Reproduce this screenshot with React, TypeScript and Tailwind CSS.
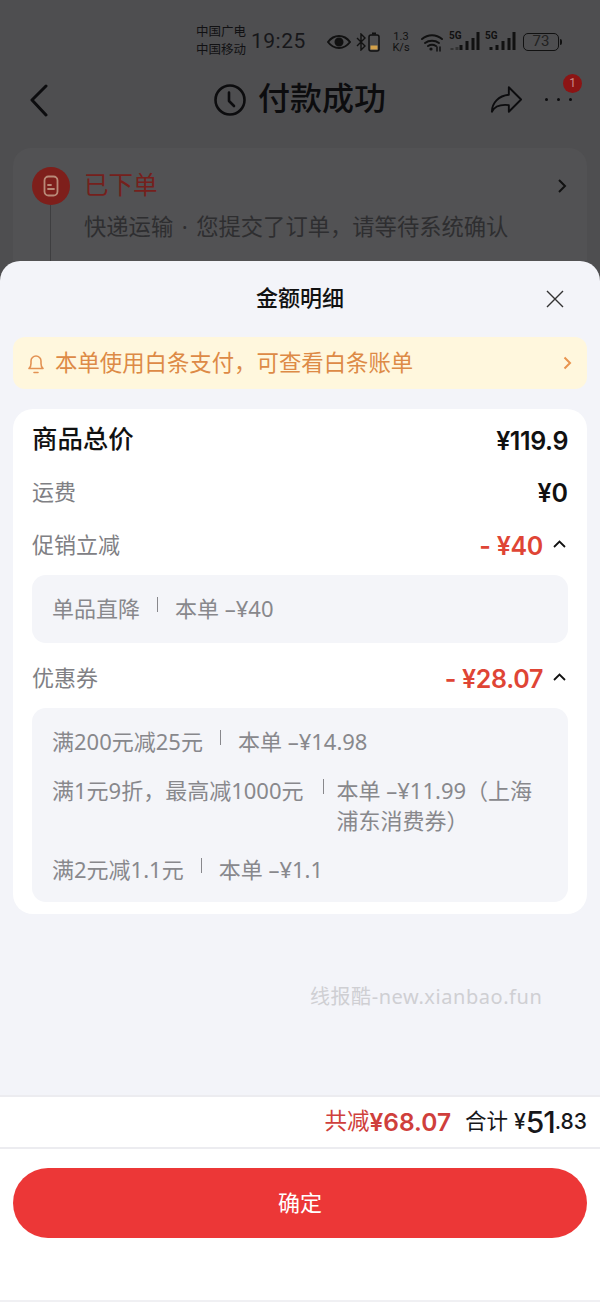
function Sep({ cls }: { cls: string }) {
  return <span className={`shrink-0 mt-[4px] w-px h-[15px] bg-[#88888c] ${cls}`} />;
}
function Up() {
  return (
    <svg className="ml-[10px] mr-[2px] -mt-[3px]" width="13" height="8" viewBox="0 0 13 8" fill="none" stroke="#111" strokeWidth="1.800">
      <path d="M1 7l5.500-5.500L12 7" />
    </svg>
  );
}
export default function App() {
  return (
    <div className="w-[600px] h-[1302px] overflow-hidden flex flex-col bg-[#4e4e50] font-['Noto_Sans','Noto_Sans_CJK_SC',sans-serif]">
      {/* dimmed page */}
      <div className="h-[261px] shrink-0 flex flex-col">
        <div className="h-[82px] shrink-0 flex items-center pl-[196px] pt-[1px] text-[#111113]">
          <div className="flex flex-col text-[12.5px] leading-[18px] w-[52px] -mt-[1px]">
            <span>中国广电</span>
            <span>中国移动</span>
          </div>
          <span className="text-[21px] leading-none ml-[3px] w-[57px] font-['Roboto',sans-serif] tracking-[0.5px] text-[#17171a]">19:25</span>
          <svg className="ml-[19px]" width="24" height="16" viewBox="0 0 24 16" fill="none" stroke="#111" strokeWidth="2"><path d="M1 8c3-4 7-6 11-6s8 2 11 6c-3 4-7 6-11 6S4 12 1 8z" /><circle cx="12" cy="8" r="3.500" fill="#111" /></svg>
          <svg className="ml-[5px]" width="10" height="18" viewBox="0 0 10 18" fill="none" stroke="#111" strokeWidth="1.400"><path d="M1 5l8 8-4 4V1l4 4-8 8" /></svg>
          <svg className="ml-[2px]" width="12" height="20" viewBox="0 0 12 20" fill="none"><rect x="1" y="3" width="10" height="16" rx="2" stroke="#111" strokeWidth="1.500" /><rect x="4" y="0.500" width="4" height="2" fill="#111" /><rect x="2.500" y="13.500" width="7" height="4" fill="#d4a24a" /></svg>
          <div className="ml-[9px] flex flex-col items-center text-[11px] leading-[11px] w-[24px] font-['Roboto',sans-serif] text-[#111]">
            <span>1.3</span>
            <span>K/s</span>
          </div>
          <svg className="ml-[7px]" width="24" height="20" viewBox="0 0 24 20" fill="none" stroke="#111" strokeWidth="2" strokeLinecap="round"><path d="M2 7c6-5 14-5 20 0M5 11c4-3 10-3 14 0M8 14c2.500-1.500 5.500-1.500 8 0" /><circle cx="11" cy="17" r="1.600" fill="#111" stroke="none" /><path d="M17 15v4M20 15v4" strokeWidth="1.500" /></svg>
          <div className="ml-[5px] relative w-[31px] h-[20px]">
            <span className="absolute left-0 -top-[1px] text-[10px] leading-[10px] font-bold font-['Roboto',sans-serif] text-[#111]">5G</span>
            <svg className="absolute left-0 top-0" width="31" height="20" viewBox="0 0 31 20" stroke="#111" strokeWidth="3"><path d="M3 18v-2M8 18v-3" stroke="#333" /><path d="M12 18v-5M18 18v-9M24 18v-12M29 18v-18" /></svg>
          </div>
          <div className="ml-[5px] relative w-[31px] h-[20px]">
            <span className="absolute left-0 -top-[1px] text-[10px] leading-[10px] font-bold font-['Roboto',sans-serif] text-[#111]">5G</span>
            <svg className="absolute left-0 top-0" width="31" height="20" viewBox="0 0 31 20" stroke="#111" strokeWidth="3"><path d="M6 18v-3M12 18v-5M18 18v-9M24 18v-12M29 18v-18" /></svg>
          </div>
          <div className="ml-[7px] w-[36px] h-[18px] rounded-[5px] border-[1.5px] border-[#111] flex items-center justify-center text-[15px] leading-none font-['Roboto',sans-serif] text-[#222]">73</div>
          <div className="ml-[1px] w-[2px] h-[6px] rounded-r bg-[#111]" />
        </div>
        <div className="h-[36px] shrink-0 relative flex items-center justify-center">
          <svg className="absolute left-[29px] top-[1px]" width="20" height="34" viewBox="0 0 20 34" fill="none" stroke="#0c0c0e" strokeWidth="3" strokeLinecap="round" strokeLinejoin="round"><path d="M17 3L3 17l14 15" /></svg>
          <div className="flex items-center gap-[12px] -mt-[1px]">
            <svg width="32" height="32" viewBox="0 0 32 32" fill="none" stroke="#0c0c0e" strokeWidth="2.600" strokeLinecap="round" strokeLinejoin="round"><circle cx="16" cy="16" r="14.500" /><path d="M15 8.500v8.500l5 5" /></svg>
            <span className="text-[32px] leading-[36px] font-medium text-[#0c0c0e] pb-[3px]">付款成功</span>
          </div>
          <svg className="absolute left-[490px] top-[3px]" width="32" height="29" viewBox="0 0 34 30" fill="none" stroke="#0c0c0e" strokeWidth="2" strokeLinejoin="round"><path d="M20 2l13 13-13 13v-7C11 20 5 22 2 28c0-9 7-17 18-18V2z" /></svg>
          <div className="absolute left-[545px] top-[16px] flex gap-[9px]">
            <span className="w-[3px] h-[3px] rounded-full bg-[#0c0c0e]" />
            <span className="w-[3px] h-[3px] rounded-full bg-[#0c0c0e]" />
            <span className="w-[3px] h-[3px] rounded-full bg-[#0c0c0e]" />
          </div>
          <span className="absolute left-[563px] -top-[8px] w-[19px] h-[19px] rounded-full bg-[#8c1414] text-[#c98a8a] text-[12px] leading-[19px] text-center font-['Roboto',sans-serif]">1</span>
        </div>
        <div className="mt-[30px] mx-[13px] flex-1 rounded-t-[18px] bg-[#525254] px-[19px] pt-[19px] relative">
          <div className="flex items-center">
            <div className="w-[38px] h-[38px] rounded-full bg-[#7e1f1b] flex items-center justify-center">
              <svg width="16" height="22" viewBox="0 0 16 22" fill="none" stroke="#b98a78" strokeWidth="1.800" strokeLinecap="round"><rect x="1.500" y="1.500" width="13" height="19" rx="4" /><path d="M5 10h3M5 14h6" /></svg>
            </div>
            <span className="ml-[14px] text-[24.5px] leading-[34px] pb-[2px] text-[#75201c]">已下单</span>
            <svg className="ml-auto mr-[1px]" width="10" height="16" viewBox="0 0 10 16" fill="none" stroke="#111" strokeWidth="2"><path d="M2 2l6 6-6 6" /></svg>
          </div>
          <div className="ml-[52px] mt-[7px] text-[22.3px] leading-[30px] text-[#2e2e30] flex">
            <span>快递运输</span>
            <span className="w-[23px] text-center">·</span>
            <span>您提交了订单，请等待系统确认</span>
          </div>
          <div className="absolute left-[37px] top-[57px] bottom-0 w-px bg-[#3e3e40]" />
        </div>
      </div>

      {/* sheet */}
      <div className="flex-1 rounded-t-[20px] bg-[#f3f4f9] flex flex-col overflow-hidden">
        <div className="h-[76px] shrink-0 relative flex items-center justify-center">
          <span className="text-[22px] leading-[30px] font-medium text-[#111] pb-[4px]">金额明细</span>
          <svg className="absolute left-[546px] top-[29px]" width="18" height="18" viewBox="0 0 18 18" fill="none" stroke="#333" strokeWidth="1.400"><path d="M1 1l16 16M17 1L1 17" /></svg>
        </div>
        <div className="mx-[13px] h-[52px] shrink-0 rounded-[12px] bg-[#fff7dd] flex items-center pl-[14px] pr-[15px]">
          <svg width="18" height="21" viewBox="0 0 18 21" fill="none" stroke="#e39253" strokeWidth="1.600" strokeLinecap="round" strokeLinejoin="round"><path d="M2 15.500h14c-1.500-1-2-2.500-2-5V8A5 5 0 0 0 4 8v2.500c0 2.500-.5 4-2 5zM7 19.500h4" /></svg>
          <span className="ml-[10px] text-[22.4px] leading-[30px] pb-[1px] text-[#dd8a46]">本单使用白条支付，可查看白条账单</span>
          <svg className="ml-auto" width="9" height="14" viewBox="0 0 9 14" fill="none" stroke="#e8944f" strokeWidth="2"><path d="M1.500 1.500L7 7l-5.500 5.500" /></svg>
        </div>
        <div className="mx-[13px] mt-[20px] h-[505px] shrink-0 rounded-[20px] bg-white px-[19px] pt-[13px]">
          <div className="flex items-center justify-between h-[36px]">
            <span className="text-[25.4px] leading-[32px] pb-[4px] font-medium text-[#111]">商品总价</span>
            <span className="text-[25px] leading-[36px] pt-[2px] tracking-[-0.4px] font-semibold font-['Inter',sans-serif] text-[#111]">¥119.9</span>
          </div>
          <div className="flex items-center justify-between h-[36px] mt-[16px]">
            <span className="text-[22px] leading-[30px] pb-[3px] text-[#808084]">运费</span>
            <span className="text-[25px] leading-[36px] pt-[2px] font-semibold font-['Inter',sans-serif] text-[#111]">¥0</span>
          </div>
          <div className="flex items-center justify-between h-[36px] mt-[17px]">
            <span className="text-[22px] leading-[30px] pb-[3px] text-[#808084]">促销立减</span>
            <div className="flex items-center">
              <span className="text-[25px] leading-[36px] pt-[1px] tracking-[-0.3px] font-semibold font-['Inter',sans-serif] text-[#df4535]">- ¥40</span>
              <Up />
            </div>
          </div>
          <div className="mt-[12px] h-[68px] rounded-[14px] bg-[#f4f5f9] px-[20px] flex items-start pt-[18px] text-[22px] leading-[30px] text-[#88888c]">
            <span>单品直降</span>
            <Sep cls="ml-[17px]" />
            <span className="ml-[17px]">本单 –¥40</span>
          </div>
          <div className="flex items-center justify-between h-[36px] mt-[17px]">
            <span className="text-[22px] leading-[30px] pb-[3px] text-[#808084]">优惠券</span>
            <div className="flex items-center">
              <span className="text-[25px] leading-[36px] pt-[1px] tracking-[-0.3px] font-semibold font-['Inter',sans-serif] text-[#df4535]">- ¥28.07</span>
              <Up />
            </div>
          </div>
          <div className="mt-[12px] h-[194px] rounded-[14px] bg-[#f4f5f9] px-[20px] pt-[18px] flex flex-col text-[22px] leading-[30px] text-[#88888c]">
            <div className="flex items-start">
              <span>满200元减25元</span>
              <Sep cls="ml-[17px]" />
              <span className="ml-[17px]">本单 –¥14.98</span>
            </div>
            <div className="flex items-start mt-[19px]">
              <span className="shrink-0">满1元9折，最高减1000元</span>
              <Sep cls="ml-[19px]" />
              <span className="ml-[13px] w-[205px]">本单 –¥11.99（上海浦东消费券）</span>
            </div>
            <div className="flex items-start mt-[19px]">
              <span>满2元减1.1元</span>
              <Sep cls="ml-[17px]" />
              <span className="ml-[17px]">本单 –¥1.1</span>
            </div>
          </div>
        </div>
        <div className="flex-1 relative">
          <span className="absolute left-[310px] top-[70px] text-[20px] leading-[26px] tracking-[0.55px] text-[#cfcfd3]">线报酷-new.xianbao.fun</span>
        </div>
        <div className="h-[54px] shrink-0 bg-white border-y-2 border-[#ececf0] flex items-center justify-end pr-[13px]">
          <span className="text-[22.5px] leading-[30px] pb-[2px] text-[#cf3f3c]">共减</span>
          <span className="text-[24.5px] leading-[30px] font-semibold font-['Inter',sans-serif] text-[#cf3f3c]">¥68.07</span>
          <span className="ml-[14px] text-[21.5px] leading-[30px] pb-[2px] text-[#17171a]">合计</span>
          <span className="ml-[6px] text-[21px] leading-[30px] font-medium font-['Inter',sans-serif] text-[#17171a]">¥</span>
          <span className="text-[30px] leading-[30px] tracking-[-1px] font-medium font-['Inter',sans-serif] text-[#17171a]">51</span>
          <span className="text-[21px] leading-[30px] font-medium font-['Inter',sans-serif] text-[#17171a]">.83</span>
        </div>
        <div className="h-[153px] shrink-0 bg-white px-[13px] pt-[19px] border-b-2 border-[#f0f0f3]">
          <div className="h-[70px] rounded-full bg-[#ec3737] flex items-center justify-center text-[22px] leading-[30px] pb-[2px] text-white">确定</div>
        </div>
      </div>
    </div>
  );
}
